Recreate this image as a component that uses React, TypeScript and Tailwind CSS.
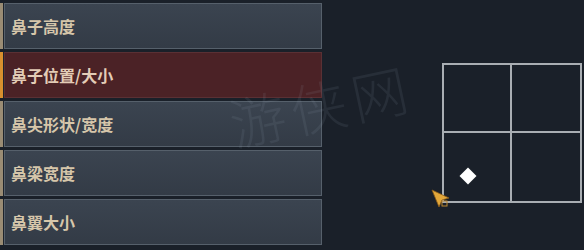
const items = [
  { label: "鼻子高度", active: false },
  { label: "鼻子位置/大小", active: true },
  { label: "鼻尖形状/宽度", active: false },
  { label: "鼻梁宽度", active: false },
  { label: "鼻翼大小", active: false },
];

function MenuRow({ label, active }: { label: string; active: boolean }) {
  return (
    <div className="flex h-[46px]">
      <div className={active ? "w-[3px] bg-[#d8902e]" : "w-[3px] bg-[#9a8c74]"} />
      <div className="w-px bg-[#1d232b]" />
      <div
        className={
          active
            ? "flex flex-1 items-center border border-[#5a3034] bg-[#4b2226] pl-[6px]"
            : "flex flex-1 items-center border border-[#56606b] bg-gradient-to-b from-[#3b4450] to-[#333b46] pl-[6px]"
        }
      >
        <span
          className={
            active
              ? "text-[16px] font-bold text-[#e3ccb6]"
              : "text-[16px] font-bold text-[#d6c6aa]"
          }
        >
          {label}
        </span>
      </div>
    </div>
  );
}

function Cursor() {
  return (
    <svg width="24" height="22" viewBox="0 0 24 22" className="absolute left-[431px] top-[189px]">
      <path d="M1 1 L18 9 L11 11 L8 18 Z" fill="#e2a73a" stroke="#8a5a18" strokeWidth="0.8" />
      <rect x="11" y="12" width="5" height="5" fill="none" stroke="#c08a30" strokeWidth="1" />
    </svg>
  );
}

export default function App() {
  return (
    <div
      className="relative h-[250px] w-[584px] overflow-hidden bg-[#1a2029]"
      style={{ fontFamily: '"Noto Sans CJK SC", "Noto Sans", sans-serif' }}
    >
      <div className="flex h-full">
        <div className="flex w-[322px] flex-col gap-[3px] pt-[3px]">
          {items.map((it) => (
            <MenuRow key={it.label} label={it.label} active={it.active} />
          ))}
        </div>
        <div className="flex-1 pl-[120px] pt-[63px]">
          <div className="relative grid h-[140px] w-[140px] grid-cols-2 grid-rows-2 border-2 border-[#a9aeb3]">
            <div className="border-b-2 border-r-2 border-[#a9aeb3]" />
            <div className="border-b-2 border-[#a9aeb3]" />
            <div className="relative border-r-2 border-[#a9aeb3]">
              <div className="absolute left-[18px] top-[37px] h-[12px] w-[12px] rotate-45 bg-white" />
            </div>
            <div />
          </div>
        </div>
      </div>
      <div className="pointer-events-none absolute left-[228px] top-[62px] -rotate-12 text-[56px] font-light tracking-[6px] text-[#9aaabb] opacity-10">
        游侠网
      </div>
      <Cursor />
    </div>
  );
}
